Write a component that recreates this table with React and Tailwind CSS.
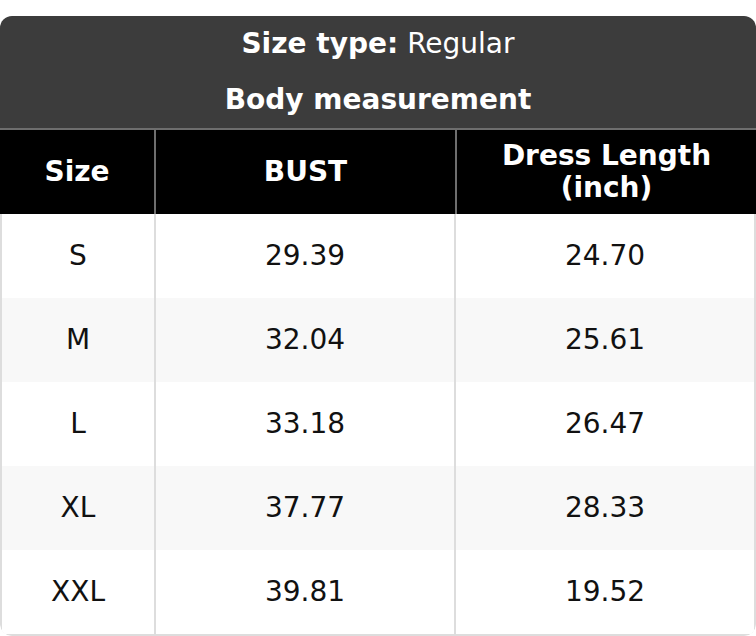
const rows = [
  ["S", "29.39", "24.70"],
  ["M", "32.04", "25.61"],
  ["L", "33.18", "26.47"],
  ["XL", "37.77", "28.33"],
  ["XXL", "39.81", "19.52"],
];

export default function App() {
  return (
    <div className="bg-white pt-[16px] font-['DejaVu_Sans',sans-serif] text-[28px]">
      <div className="overflow-hidden rounded-[12px]">
        {/* title block */}
        <div className="border-b-2 border-[#6e6e6e] bg-[#3c3c3c] text-white">
          <div className="flex h-[56px] items-center justify-center">
            <span className="font-bold">Size type:</span>
            <span className="ml-[9px]">Regular</span>
          </div>
          <div className="flex h-[56px] items-center justify-center font-bold">
            Body measurement
          </div>
        </div>

        {/* column headers */}
        <div className="grid h-[84px] grid-cols-[154px_1fr_1fr] bg-black font-bold text-white">
          <div className="flex items-center justify-center">Size</div>
          <div className="flex items-center justify-center border-l-2 border-[#6e6e6e]">BUST</div>
          <div className="flex flex-col items-center justify-center border-l-2 border-[#6e6e6e] leading-[32px]">
            <span>Dress Length</span>
            <span>(inch)</span>
          </div>
        </div>

        {/* body */}
        <div className="rounded-b-[12px] border-x-2 border-b-2 border-[#dddddd] text-[#111]">
          {rows.map((r, i) => (
            <div
              key={r[0]}
              className={`grid h-[84px] grid-cols-[152px_1fr_1fr] ${i % 2 ? "bg-[#f8f8f8]" : "bg-white"}`}
            >
              <div className="flex items-center justify-center">{r[0]}</div>
              <div className="flex items-center justify-center border-l-2 border-[#dddddd]">{r[1]}</div>
              <div className="flex items-center justify-center border-l-2 border-[#dddddd]">{r[2]}</div>
            </div>
          ))}
        </div>
      </div>
    </div>
  );
}
